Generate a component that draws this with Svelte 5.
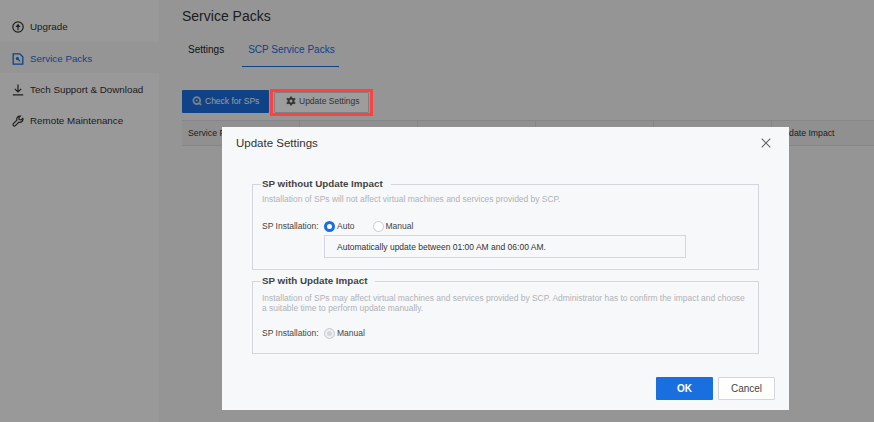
<script>
	const nav = [
		{ label: 'Upgrade', icon: 'upgrade' },
		{ label: 'Service Packs', icon: 'packs', active: true },
		{ label: 'Tech Support & Download', icon: 'download' },
		{ label: 'Remote Maintenance', icon: 'wrench' }
	];
	const columns = ['Service Pack', '', '', '', '', 'Update Impact'];
</script>

<div class="page">
	<aside class="sidebar">
		{#each nav as item}
			<div class="nav-item" class:active={item.active}>
				<svg class="nav-icon" viewBox="0 0 12 12" fill="none" stroke="currentColor" stroke-width="1.2">
					{#if item.icon === 'upgrade'}
						<circle cx="6" cy="6" r="5.2" />
						<path d="M6 9.2V3.6" />
						<path d="M3.4 6 6 3l2.6 3z" fill="currentColor" stroke="none" />
					{:else if item.icon === 'packs'}
						<path d="M1.2.8h6.6l3 3v7.4H1.2z" stroke-width="1.3" />
						<circle cx="5.4" cy="5.6" r="1.6" fill="currentColor" stroke="none" />
						<path d="m6.2 6.4 2 2" />
					{:else if item.icon === 'download'}
						<path d="M6 .6v7.2M2.8 4.8 6 8l3.2-3.2M.8 10.8h10.4" />
					{:else}
						<path d="M7 1.2a3 3 0 0 1 1.4-.2L6.9 2.6l.2 2 2 .3L10.8 3.4a3 3 0 0 1-3.9 3.7L3.4 10.6a1.3 1.3 0 0 1-2-2L4.9 5.1A3 3 0 0 1 7 1.2z" />
					{/if}
				</svg>
				<span>{item.label}</span>
			</div>
		{/each}
	</aside>

	<main class="content">
		<h1>Service Packs</h1>
		<div class="tabs">
			<div class="tab">Settings</div>
			<div class="tab current">SCP Service Packs</div>
		</div>
		<div class="toolbar">
			<button class="check">
				<svg viewBox="0 0 10 10" width="10" height="10">
					<circle cx="4.8" cy="4.6" r="3.4" fill="none" stroke="#c9d6ea" stroke-width="1.8" />
					<path d="m6.8 6.8 2.4 2" stroke="#c9d6ea" stroke-width="1.6" />
					<circle cx="4.8" cy="4.6" r="1" fill="#c9d6ea" />
				</svg>
				<span>Check for SPs</span>
			</button>
			<div class="highlight">
				<button class="update">
					<svg viewBox="0 0 12 12" width="10" height="10">
						<circle cx="6" cy="6" r="3" fill="none" stroke="currentColor" stroke-width="2.4" />
						<path d="M6 .6v2M6 9.4v2M.9 3l1.7 1M9.4 8l1.7 1M.9 9l1.7-1M9.4 4l1.7-1" stroke="currentColor" stroke-width="2" />
					</svg>
					<span>Update Settings</span>
				</button>
			</div>
		</div>
		<div class="table-head">
			{#each columns as col}
				<div class="cell">{col}</div>
			{/each}
		</div>
	</main>

	<div class="overlay"></div>

	<div class="modal">
		<header class="modal-head">
			<span>Update Settings</span>
			<svg class="close" viewBox="0 0 10 10" width="10" height="10">
				<path d="M.7.7l8.6 8.6M9.3.7.7 9.3" stroke="#666" stroke-width="1.1" fill="none" />
			</svg>
		</header>

		<div class="modal-body">
			<fieldset class="first">
				<legend>SP without Update Impact</legend>
				<p class="hint">Installation of SPs will not affect virtual machines and services provided by SCP.</p>
				<div class="field">
					<span class="field-label">SP Installation:</span>
					<span class="radio on"></span><span class="radio-text">Auto</span>
					<span class="radio second"></span><span class="radio-text">Manual</span>
				</div>
				<div class="note">Automatically update between 01:00 AM and 06:00 AM.</div>
			</fieldset>

			<fieldset class="other">
				<legend>SP with Update Impact</legend>
				<p class="hint">Installation of SPs may affect virtual machines and services provided by SCP. Administrator has to confirm the impact and choose a suitable time to perform update manually.</p>
				<div class="field low">
					<span class="field-label">SP Installation:</span>
					<span class="radio off"></span><span class="radio-text">Manual</span>
				</div>
			</fieldset>
		</div>

		<footer class="modal-foot">
			<button class="ok">OK</button>
			<button class="cancel">Cancel</button>
		</footer>
	</div>
</div>

<style>
	:global(body) {
		margin: 0;
		overflow: hidden;
	}

	.page {
		position: relative;
		display: flex;
		width: 874px;
		height: 422px;
		overflow: hidden;
		background: #f8f9f8;
		font-family: 'Liberation Sans', Arial, sans-serif;
		color: #333;
	}

	.sidebar {
		flex: 0 0 159px;
		padding-top: 11px;
		background: #ffffff;
		box-sizing: border-box;
	}

	.nav-item {
		display: flex;
		align-items: center;
		gap: 6px;
		height: 31px;
		box-sizing: border-box;
		padding-left: 12px;
		font-size: 9.8px;
		color: #333;
	}

	.nav-item + .nav-item {
		padding-top: 2px;
	}

	.nav-item.active {
		background: #f8f9f8;
		color: #1a6fe0;
	}

	.nav-icon {
		width: 12px;
		height: 12px;
		flex: none;
	}

	.content {
		flex: 1;
		padding-left: 23px;
		min-width: 0;
	}

	h1 {
		margin: 8px 0 0;
		font-size: 14px;
		line-height: 16px;
		font-weight: 400;
		color: #333;
	}

	.tabs {
		display: flex;
		margin-top: 10px;
		height: 33px;
	}

	.tab {
		line-height: 32px;
		font-size: 10px;
		color: #222;
	}

	.tab:first-child {
		padding-left: 6px;
		margin-right: 18px;
	}

	.tab.current {
		padding: 0 4px 0 6px;
		height: 32px;
		color: #1a6fe0;
		border-bottom: 1px solid #1a6fe0;
	}

	.toolbar {
		display: flex;
		align-items: flex-start;
		margin-top: 23px;
	}

	button {
		font-family: inherit;
		cursor: pointer;
	}

	.toolbar button {
		display: flex;
		align-items: center;
		font-size: 8.5px;
		border-radius: 1px;
	}

	.check {
		width: 87px;
		height: 23px;
		gap: 3px;
		padding: 0 0 2px 10px;
		background: #1a6fe0;
		border: none;
		color: #fff;
	}

	.highlight {
		position: relative;
		z-index: 2;
		margin: -1px 0 0 1px;
		padding: 0 1px;
		border: 3px solid #fb4242;
		box-sizing: border-box;
		width: 103px;
		height: 27px;
		background: #9a9a9a;
	}

	.update {
		width: 95px;
		height: 21px;
		padding: 0 0 3px 11px;
		gap: 3px;
		box-sizing: border-box;
		background: #9d9d9d;
		border: 1px solid #7f7f7f;
		color: #333;
	}

	.table-head {
		display: grid;
		grid-template-columns: repeat(5, 118px) 1fr;
		margin-top: 4px;
		height: 26px;
		background: #f0f1f1;
		border-top: 1px solid #dcdfe3;
		border-bottom: 1px solid #dcdfe3;
		box-sizing: border-box;
		font-size: 8.7px;
	}

	.cell {
		padding-left: 6px;
		line-height: 24px;
		border-right: 1px solid #dcdfe3;
		white-space: nowrap;
	}

	.cell:last-child {
		border-right: none;
	}

	.overlay {
		position: absolute;
		inset: 0;
		background: rgba(0, 0, 0, 0.4);
		z-index: 1;
	}

	.modal {
		position: absolute;
		left: 222px;
		top: 127px;
		width: 567px;
		height: 283px;
		display: flex;
		flex-direction: column;
		background: #f7f8fa;
		z-index: 4;
		box-sizing: border-box;
	}

	.modal-head {
		display: flex;
		align-items: center;
		justify-content: space-between;
		height: 32px;
		padding: 0 18px 0 14px;
		font-size: 11.5px;
		color: #333;
	}

	.modal-body {
		flex: 1;
		display: flex;
		flex-direction: column;
		padding: 19px 30px 0;
	}

	fieldset {
		margin: 0;
		padding: 0 9px;
		border: 1px solid #d3d6de;
		box-sizing: border-box;
		min-width: 0;
	}

	fieldset.first {
		flex: 0 0 92px;
	}

	fieldset.other {
		flex: 0 0 79px;
		margin-top: 5px;
	}

	legend {
		padding: 0 8px 0 1px;
		margin-left: -1px;
		font-size: 9.8px;
		line-height: 12px;
		font-weight: 700;
		color: #444;
	}

	.hint {
		margin: 4px 0 0;
		font-size: 8.45px;
		line-height: 10px;
		color: #b0b3b8;
	}

	.other .hint {
		margin-top: 6px;
	}

	.field {
		display: flex;
		align-items: center;
		height: 14px;
		margin-top: 15px;
		font-size: 8.5px;
		color: #444;
	}

	.field.low {
		margin-top: 13px;
	}

	.field-label {
		width: 62px;
		flex: none;
	}

	.radio {
		width: 11px;
		height: 11px;
		flex: none;
		box-sizing: border-box;
		border-radius: 50%;
		border: 1px solid #c9ccd3;
		background: #fff;
		margin-right: 2px;
	}

	.radio.second {
		margin-left: 18px;
	}

	.radio.on {
		border: 3px solid #1a6fe0;
	}

	.radio.off {
		background: #d5d6d8;
		box-shadow: inset 0 0 0 2px #eeeff1;
	}

	.note {
		width: 362px;
		height: 23px;
		margin: 2px 0 0 62px;
		padding-left: 12px;
		line-height: 22px;
		font-size: 8.5px;
		color: #333;
		border: 1px solid #d3d6de;
		box-sizing: border-box;
	}

	.modal-foot {
		display: flex;
		justify-content: flex-end;
		gap: 5px;
		padding: 0 14px 10px 0;
	}

	.modal-foot button {
		width: 57px;
		height: 23px;
		font-size: 10px;
		border-radius: 1px;
		padding: 0;
	}

	.ok {
		background: #1a6fe0;
		border: none;
		color: #fff;
		font-weight: 700;
	}

	.cancel {
		background: #fff;
		border: 1px solid #d3d6de;
		color: #444;
	}
</style>
